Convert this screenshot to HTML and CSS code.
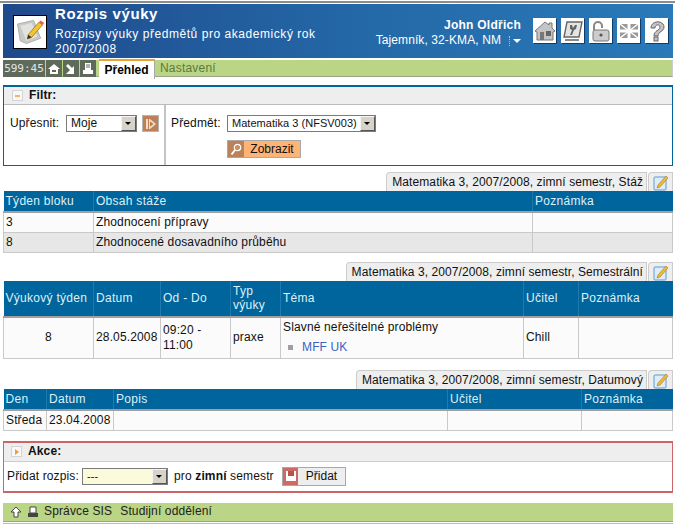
FILE: index.html
```html
<!DOCTYPE html>
<html lang="cs">
<head>
<meta charset="utf-8">
<title>Rozpis výuky</title>
<link rel="stylesheet" href="styles.css">
</head>
<body>
<div class="page">
  <header class="head">
    <div class="logo">
      <svg width="36" height="36" viewBox="0 0 36 36"><rect width="36" height="36" fill="#fff"/><path d="M4 9 22 5l8 20-16 6-7-3z" fill="#c9c9c5" stroke="#aaa"/><path d="M7 11l13-3 6 15-12 5z" fill="#e2e2de"/><path d="M16 21 28 7l4 3-12 14-5 2z" fill="#f3c533" stroke="#8a6a10" stroke-width=".8"/><path d="M28 7l2-2 4 3-2 2z" fill="#e0605a"/><path d="M15 26l1-5 4 3z" fill="#333"/></svg>
    </div>
    <div class="titles">
      <h1>Rozpis výuky</h1>
      <p>Rozpisy výuky předmětů pro akademický rok 2007/2008</p>
    </div>
    <div class="user">
      <strong>John Oldřich</strong>
      <span>Tajemník, 32-KMA, NM <i class="dots"></i><i class="caret"></i></span>
    </div>
    <div class="tools">
      <div class="tool"><svg width="22" height="22" viewBox="0 0 22 22"><path d="M1 11 11 2l4 3V3h3v5l3 3-2 1v8H3v-8z" fill="#c4c4c4" stroke="#777"/><rect x="6" y="12" width="4" height="8" fill="#777"/><rect x="12" y="11" width="5" height="5" fill="#666"/></svg></div>
      <div class="tool"><svg width="22" height="22" viewBox="0 0 22 22"><path d="M5 2h15l-3 15H2z" fill="#e4e4e4" stroke="#666" stroke-width="1.400"/><path d="M8 5h2l1 3 2-3h2l-1 4-2 1-2 5H8l2-5-2-1z" fill="#666"/><path d="M3 19h14v2H3z" fill="#888"/></svg></div>
      <div class="tool"><svg width="22" height="22" viewBox="0 0 22 22"><path d="M4 10V6a4 4 0 0 1 8 0v2" fill="none" stroke="#888" stroke-width="2"/><rect x="3" y="10" width="16" height="11" rx="2" fill="#ccc" stroke="#777"/><circle cx="11" cy="15" r="1.600" fill="#555"/></svg></div>
      <div class="tool"><svg width="22" height="22" viewBox="0 0 22 22"><rect x="2" y="4" width="18" height="14" fill="#999"/><path d="M2 4l18 14M20 4 2 18" stroke="#fff" stroke-width="1.500"/><path d="M11 4v14M2 11h18" stroke="#fff" stroke-width="3"/></svg></div>
      <div class="tool"><svg width="22" height="22" viewBox="0 0 22 22"><path d="M5 8c0-8 13-8 13-1 0 5-6 4-6 9H8c0-6 6-5 6-9 0-3-5-3-5 1z" fill="#c4c4c4" stroke="#666"/><rect x="8" y="17" width="4" height="4" fill="#c4c4c4" stroke="#666"/></svg></div>
    </div>
  </header>

  <nav class="nav">
    <div class="clock">599:45</div>
    <div class="navbtn"><svg width="12" height="12" viewBox="0 0 12 12"><path d="M0 6 6 1l6 5h-2v5H2V6z" fill="#fff"/><rect x="4" y="7" width="4" height="2" fill="#5f6b5a"/></svg></div>
    <div class="navbtn"><svg width="12" height="12" viewBox="0 0 12 12"><path d="M1 3l2-2 4 4 2-2v8H1l2-2 2-2z" fill="#fff"/></svg></div>
    <div class="navbtn"><svg width="12" height="12" viewBox="0 0 12 12"><path d="M3 0h6v7H3z" fill="#fff"/><path d="M1 7h10v4H1z" fill="#fff"/><path d="M4 2h4M4 4h4" stroke="#5f6b5a"/></svg></div>
    <div class="tab-active">Přehled</div>
    <div class="tab">Nastavení</div>
  </nav>

  <section class="panel filter">
    <div class="panel-head">
      <span class="toggle"><i class="minus"></i></span><b>Filtr:</b>
    </div>
    <div class="filter-body">
      <div class="filter-left">
        <span>Upřesnit:</span>
        <div class="select sel-moje"><span class="val">Moje</span><i class="arrow"></i></div>
        <div class="go"><svg width="12" height="12" viewBox="0 0 12 12"><path d="M1 1h2v10H1zM4 1h1l6 5-6 5H4z" fill="#f3dcc6"/><path d="M5 3.500 8.500 6 5 8.500z" fill="#b9784a"/></svg></div>
      </div>
      <div class="filter-right">
        <div class="row">
          <span>Předmět:</span>
          <div class="select sel-predmet"><span class="val">Matematika 3 (NFSV003)</span><i class="arrow"></i></div>
        </div>
        <div class="btn btn-show">
          <span class="btn-ico"><svg width="12" height="13" viewBox="0 0 12 13"><circle cx="7.500" cy="4.500" r="3.200" fill="#c98f63" stroke="#fff" stroke-width="1.200"/><path d="M5 7 1.500 11.500" stroke="#fff" stroke-width="2"/></svg></span>
          <span class="btn-txt">Zobrazit</span>
        </div>
      </div>
    </div>
  </section>

  <section class="block block-1">
    <div class="tabs"><div class="ttl">Matematika 3, 2007/2008, zimní semestr, Stáž</div><div class="edit"><svg width="16" height="16" viewBox="0 0 16 16"><rect x="1" y="2" width="12" height="13" rx="1" fill="#dcecf8" stroke="#5b9bd5"/><path d="M5 10 13 1l2 2-8 9-3 1z" fill="#f1b93a" stroke="#a8781a" stroke-width=".6"/></svg></div></div>
    <table class="grid t1">
      <colgroup><col class="c90"><col class="c439"><col></colgroup>
      <thead><tr><th>Týden bloku</th><th>Obsah stáže</th><th>Poznámka</th></tr></thead>
      <tbody>
        <tr><td>3</td><td>Zhodnocení přípravy</td><td></td></tr>
        <tr class="alt"><td>8</td><td>Zhodnocené dosavadního průběhu</td><td></td></tr>
      </tbody>
    </table>
  </section>

  <section class="block block-2">
    <div class="tabs"><div class="ttl">Matematika 3, 2007/2008, zimní semestr, Semestrální</div><div class="edit"><svg width="16" height="16" viewBox="0 0 16 16"><rect x="1" y="2" width="12" height="13" rx="1" fill="#dcecf8" stroke="#5b9bd5"/><path d="M5 10 13 1l2 2-8 9-3 1z" fill="#f1b93a" stroke="#a8781a" stroke-width=".6"/></svg></div></div>
    <table class="grid t2">
      <colgroup><col class="c90"><col class="c67"><col class="c70"><col class="c50"><col class="c243"><col class="c55"><col></colgroup>
      <thead><tr><th>Výukový týden</th><th>Datum</th><th>Od - Do</th><th>Typ výuky</th><th>Téma</th><th>Učitel</th><th>Poznámka</th></tr></thead>
      <tbody>
        <tr>
          <td class="center">8</td><td>28.05.2008</td><td>09:20 - 11:00</td><td>praxe</td>
          <td><div class="topic">Slavné neřešitelné problémy</div><div class="place"><i class="sq"></i><a href="#">MFF UK</a></div></td>
          <td>Chill</td><td></td>
        </tr>
      </tbody>
    </table>
  </section>

  <section class="block block-3">
    <div class="tabs"><div class="ttl">Matematika 3, 2007/2008, zimní semestr, Datumový</div><div class="edit"><svg width="16" height="16" viewBox="0 0 16 16"><rect x="1" y="2" width="12" height="13" rx="1" fill="#dcecf8" stroke="#5b9bd5"/><path d="M5 10 13 1l2 2-8 9-3 1z" fill="#f1b93a" stroke="#a8781a" stroke-width=".6"/></svg></div></div>
    <table class="grid t3">
      <colgroup><col class="c43"><col class="c67"><col class="c334"><col class="c134"><col></colgroup>
      <thead><tr><th>Den</th><th>Datum</th><th>Popis</th><th>Učitel</th><th>Poznámka</th></tr></thead>
      <tbody><tr><td>Středa</td><td>23.04.2008</td><td></td><td></td><td></td></tr></tbody>
    </table>
  </section>

  <section class="panel action">
    <div class="panel-head">
      <span class="toggle"><i class="play"></i></span><b>Akce:</b>
    </div>
    <div class="action-body">
      <span class="add-label">Přidat rozpis:</span>
      <div class="select sel-add"><span class="val">---</span><i class="arrow"></i></div>
      <span class="pro">pro <b>zimní</b> semestr</span>
      <div class="btn btn-add">
        <span class="btn-ico"><svg width="12" height="12" viewBox="0 0 12 12"><rect x="1" y="1" width="10" height="10" fill="#fff"/><rect x="3" y="1" width="6" height="5" fill="#b5534e"/></svg></span>
        <span class="btn-txt">Přidat</span>
      </div>
    </div>
  </section>

  <footer class="foot">
    <svg width="12" height="12" viewBox="0 0 12 12"><path d="M6 1l5 5H8v5H4V6H1z" fill="#fff" stroke="#444"/></svg>
    <svg width="12" height="12" viewBox="0 0 12 12"><path d="M3 1h6v6H3z" fill="#fff" stroke="#444"/><path d="M1 7h10v4H1z" fill="#444"/></svg>
    <span class="foot-a">Správce SIS</span><span>Studijní oddělení</span>
  </footer>
</div>
</body>
</html>
```
FILE: styles.css
```css
* { box-sizing: border-box; }
html, body { margin: 0; padding: 0; background: #fff; }
body { font: 12px/15px "Liberation Sans", Arial, sans-serif; letter-spacing: .14px; color: #111; overflow: hidden; }
.page { width: 675px; height: 526px; padding: 1px 2px 0 3px; position: relative; }
.page::before { content: ""; display: block; height: 2px; margin: 0 -2px 1px -3px; background: #8c8c8c; }
i { display: block; font-style: normal; }
b { font-weight: bold; }

.head { height: 54px; display: flex; align-items: flex-start; color: #fff; background: linear-gradient(90deg, #1f4a8c 0%, #2469a8 55%, #2a79b8 100%); }
.logo { width: 34px; height: 34px; margin: 11px 0 0 10px; background: #fff; border: 1px solid #000; overflow: hidden; flex: none; }
.logo svg { display: block; width: 32px; height: 32px; }
.titles { width: 272px; margin-left: 8px; padding-top: 1px; }
.titles h1 { margin: 0; font-size: 15px; line-height: 18px; letter-spacing: .6px; font-weight: bold; }
.titles p { margin: 4px 0 0; font-size: 12px; line-height: 15px; letter-spacing: .55px; }
.user { margin-left: auto; width: 160px; text-align: right; padding-top: 14px; line-height: 15px; font-size: 12px; }
.user strong { display: block; letter-spacing: .25px; font-weight: bold; font-size: 12px; }
.user span { display: flex; justify-content: flex-end; align-items: center; letter-spacing: .1px; }
.dots { width: 1px; height: 10px; margin: 0 3px 0 8px; border-left: 1px dotted #9cc; }
.caret { width: 0; height: 0; border: 4px solid transparent; border-top: 4px solid #fff; border-bottom: 0; }
.tools { display: flex; gap: 5px; margin: 14px 5px 0 12px; }
.tool { width: 23px; height: 25px; background: #fff; box-shadow: 1px 1px 0 #123a66; display: flex; align-items: center; justify-content: center; }

.nav { margin-top: 2px; height: 17px; display: flex; background: #b9d585; border-bottom: 1px solid #9aa58a; border-right: 1px solid #ccc; }
.clock { width: 42px; height: 17px; background: #5f6b5a; color: #e4e4e4; font: 11px/17px "DejaVu Sans Mono", monospace; letter-spacing: 0; text-align: center; }
.navbtn { width: 16px; height: 17px; margin-left: 1px; background: #5f6b5a; display: flex; align-items: center; justify-content: center; }
.tab-active { width: 56px; height: 20px; margin: -1px 0 -2px 3px; background: #fff; border-top: 2px solid #e8a23c; border-right: 1px solid #aaa; font-weight: bold; text-align: center; line-height: 19px; letter-spacing: 0; color: #000; }
.tab { padding-left: 5px; line-height: 16px; color: #5d7a38; letter-spacing: .2px; }

.panel { background: #fff; border: 1px solid; }
.panel-head { display: flex; align-items: center; background: #eeeeee; border-bottom: 1px solid #bbb; font-weight: bold; }
.toggle { width: 11px; height: 11px; background: #f8f8f8; border: 1px solid #d4d4d4; display: flex; align-items: center; justify-content: center; margin-right: 6px; }
.filter { margin-top: 8px; height: 81px; border-color: #00659c; border-top-width: 2px; }
.filter .panel-head { height: 18px; padding-left: 8px; }
.minus { width: 5px; height: 2px; background: #f5b070; }
.play { width: 0; height: 0; border: 3px solid transparent; border-left: 4px solid #f19a3e; border-right: 0; }
.filter-body { display: flex; height: 60px; }
.filter-left { width: 162px; padding: 10px 0 0 6px; display: flex; align-items: flex-start; border-right: 2px solid #c4c4c4; }
.filter-left > span { width: 50px; flex: none; line-height: 16px; }
.filter-right { padding: 10px 0 0 5px; }
.row { display: flex; align-items: flex-start; }
.row > span { line-height: 16px; width: 56px; flex: none; }

.select { height: 17px; border: 1px solid #7b7b7b; display: flex; align-items: center; background: #fff; font-size: 11px; letter-spacing: .03px; }
.val { flex: 1; min-width: 0; padding-left: 4px; white-space: nowrap; overflow: hidden; }
.arrow { width: 15px; height: 15px; background: #d6d3ca; border: 1px solid; border-color: #f4f4f0 #555 #555 #f4f4f0; position: relative; flex: none; }
.arrow::after { content: ""; position: absolute; left: 3px; top: 5px; border: 3px solid transparent; border-top: 3px solid #000; border-bottom: 0; }
.sel-moje { width: 71px; margin-left: 6px; font-size: 12px; flex: none; }
.go { width: 17px; height: 17px; margin-left: 5px; background: #bc8156; border: 1px solid #b5b5b5; display: flex; align-items: center; justify-content: center; flex: none; }
.sel-predmet { width: 149px; }

.btn { display: flex; border: 1px solid #a8a8a8; height: 18px; }
.btn-ico { display: flex; align-items: center; justify-content: center; }
.btn-txt { flex: 1; text-align: center; font-size: 12px; line-height: 16px; letter-spacing: 0; }
.btn-show { width: 74px; margin: 8px 0 0 56px; }
.btn-show .btn-ico { width: 16px; background: #bc8156; }
.btn-show .btn-txt { background: #fdb475; }
.btn-add { width: 64px; height: 19px; flex: none; }
.btn-add .btn-ico { width: 15px; background: #cc6a65; }
.btn-add .btn-txt { background: #eeeeee; }

.block-1 { margin-top: 6px; }
.block-2 { margin-top: 9px; }
.block-3 { margin-top: 11px; }
.tabs { height: 19px; display: flex; justify-content: flex-end; }
.ttl { height: 19px; padding: 0 3px 0 5px; background: #eeeeee; border: 1px solid #ccc; border-bottom: 0; border-top-left-radius: 4px; line-height: 18px; white-space: nowrap; letter-spacing: .09px; }
.edit { width: 25px; height: 19px; margin-left: 1px; padding: 2px 0 0 4px; background: #eeeeee; border: 1px solid #ccc; border-bottom: 0; border-top-left-radius: 4px; flex: none; }
.edit svg { display: block; }

.grid { width: 670px; border-collapse: collapse; table-layout: fixed; }
.grid th { background: #00659c; color: #dff0f7; font-weight: normal; text-align: left; padding: 0 2px; height: 21px; border-left: 1px solid #2079ad; border-bottom: 2px solid #a0a0a0; line-height: 14px; letter-spacing: .28px; }
.grid th:first-child { border-left: 0; }
.grid td { background: #fbfbfb; border: 1px solid #c9c9c9; padding: 0 2px; height: 20px; line-height: 15px; }
.grid .alt td { background: #e7e7e7; }
.t2 th { height: 36px; }
.t2 td { height: 42px; }
.center { text-align: center; }
.c43 { width: 43px; } .c50 { width: 50px; } .c55 { width: 55px; } .c67 { width: 67px; } .c70 { width: 70px; }
.c90 { width: 90px; } .c134 { width: 134px; } .c243 { width: 243px; } .c334 { width: 334px; } .c439 { width: 439px; }
.topic { line-height: 15px; margin-bottom: 5px; }
.place { display: flex; align-items: center; padding-left: 5px; line-height: 15px; }
.sq { width: 5px; height: 5px; background: #a0a0a0; margin-right: 9px; }
.place a { color: #3a62c0; text-decoration: none; }

.action { margin-top: 10px; height: 52px; border-color: #c66; border-width: 2px 1px; }
.action .panel-head { height: 19px; padding-left: 7px; border-bottom-color: #ccc; }
.action-body { display: flex; align-items: center; height: 29px; padding-left: 3px; }
.add-label { width: 75px; flex: none; }
.sel-add { width: 86px; flex: none; background: #fbfbdc; }
.pro { width: 108px; flex: none; margin-left: 6px; }

.foot { margin-top: 10px; height: 19px; display: flex; align-items: center; gap: 5px; padding-left: 7px; background: #b9d585; border-bottom: 1px solid #9aa58a; box-shadow: 0 1px 0 #fff, 0 2px 0 #bbb; color: #222; }
.foot svg { flex: none; }
.foot-a { margin-right: 3px; }
```
